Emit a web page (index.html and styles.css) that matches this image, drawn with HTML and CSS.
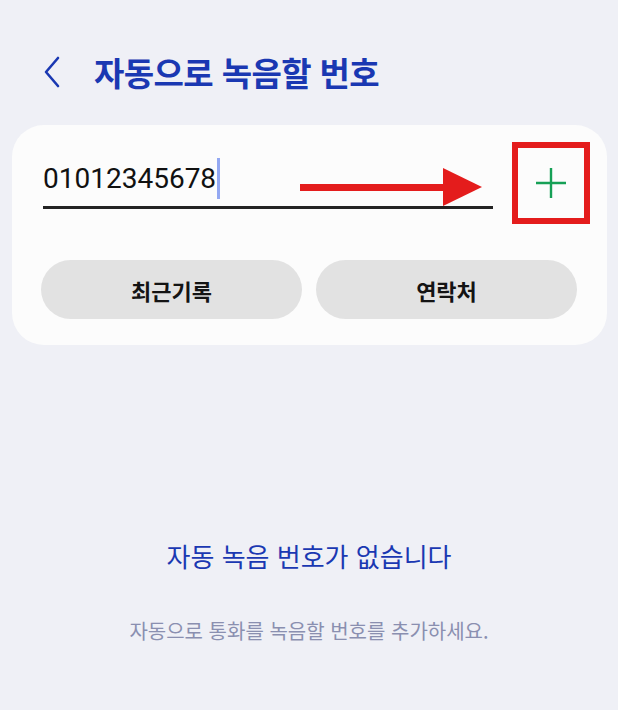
FILE: index.html
```html
<!DOCTYPE html>
<html lang="ko">
<head>
<meta charset="utf-8">
<title>자동으로 녹음할 번호</title>
<link rel="stylesheet" href="styles.css">
</head>
<body>
  <header class="header">
    <svg class="back" width="18" height="32" viewBox="0 0 18 32">
      <path d="M15 2 L3 16 L15 30" fill="none" stroke="#1a38b2" stroke-width="2.6" stroke-linecap="round" stroke-linejoin="round"/>
    </svg>
    <h1 class="title">자동으로 녹음할 번호</h1>
  </header>

  <section class="card">
    <div class="input-row">
      <div class="field">
        <span class="value">01012345678</span><span class="cursor"></span>
      </div>
      <svg class="arrow" width="182" height="40" viewBox="0 0 182 40">
        <rect x="0" y="16" width="145" height="7" fill="#e41c1c"/>
        <polygon points="143,0 182,19 143,38" fill="#e41c1c"/>
      </svg>
      <div class="add-box">
        <svg width="32" height="32" viewBox="0 0 32 32">
          <path d="M16 1 V31 M1 16 H31" stroke="#16a056" stroke-width="2.4" fill="none"/>
        </svg>
      </div>
    </div>
    <div class="btn-row">
      <button class="pill">최근기록</button>
      <button class="pill">연락처</button>
    </div>
  </section>

  <section class="empty">
    <p class="empty-title">자동 녹음 번호가 없습니다</p>
    <p class="empty-sub">자동으로 통화를 녹음할 번호를 추가하세요.</p>
  </section>
</body>
</html>
```

FILE: styles.css
```css
html, body {
  margin: 0;
  padding: 0;
}
body {
  width: 618px;
  height: 710px;
  background: #eff0f6;
  font-family: "Noto Sans CJK KR", "Noto Sans", sans-serif;
  overflow: hidden;
}
.header {
  display: flex;
  align-items: center;
  height: 44px;
  margin-top: 50px;
  padding-left: 43px;
}
.back {
  display: block;
}
.title {
  margin: 0 0 0 33px;
  font-size: 33px;
  font-weight: 700;
  color: #1a38b2;
  line-height: 44px;
  letter-spacing: -0.6px;
}
.card {
  margin: 31px 11px 0 12px;
  background: #fcfcfc;
  border-radius: 32px;
  padding: 17px 30px 26px 29px;
}
.input-row {
  position: relative;
  display: flex;
  align-items: flex-start;
}
.field {
  flex: 0 0 450px;
  width: 450px;
  height: 56px;
  margin-left: 2px;
  border-bottom: 3px solid #232323;
  display: flex;
  align-items: center;
  padding-top: 8px;
  box-sizing: content-box;
}
.value {
  font-family: Roboto, "Noto Sans", sans-serif;
  font-size: 28px;
  color: #111;
}
.cursor {
  display: inline-block;
  width: 3px;
  height: 41px;
  margin-left: 1px;
  background: #93a8f2;
}
.arrow {
  position: absolute;
  left: 259px;
  top: 26px;
}
.add-box {
  flex: 0 0 auto;
  width: 66px;
  height: 70px;
  margin-left: 19px;
  border: 6px solid #e41c1c;
  display: flex;
  align-items: center;
  justify-content: center;
}
.btn-row {
  display: flex;
  gap: 14px;
  margin-top: 36px;
}
.pill {
  flex: 1;
  height: 59px;
  border: none;
  border-radius: 30px;
  background: #e2e2e2;
  font-family: "Noto Sans CJK KR", sans-serif;
  font-size: 22px;
  font-weight: 700;
  color: #141414;
  padding: 0;
}
.empty {
  text-align: center;
  margin-top: 194px;
}
.empty-title {
  margin: 0;
  font-size: 26px;
  line-height: 34px;
  color: #1a38b2;
}
.empty-sub {
  margin: 45px 0 0;
  font-size: 20px;
  line-height: 26px;
  color: #8a8fb0;
}
```
